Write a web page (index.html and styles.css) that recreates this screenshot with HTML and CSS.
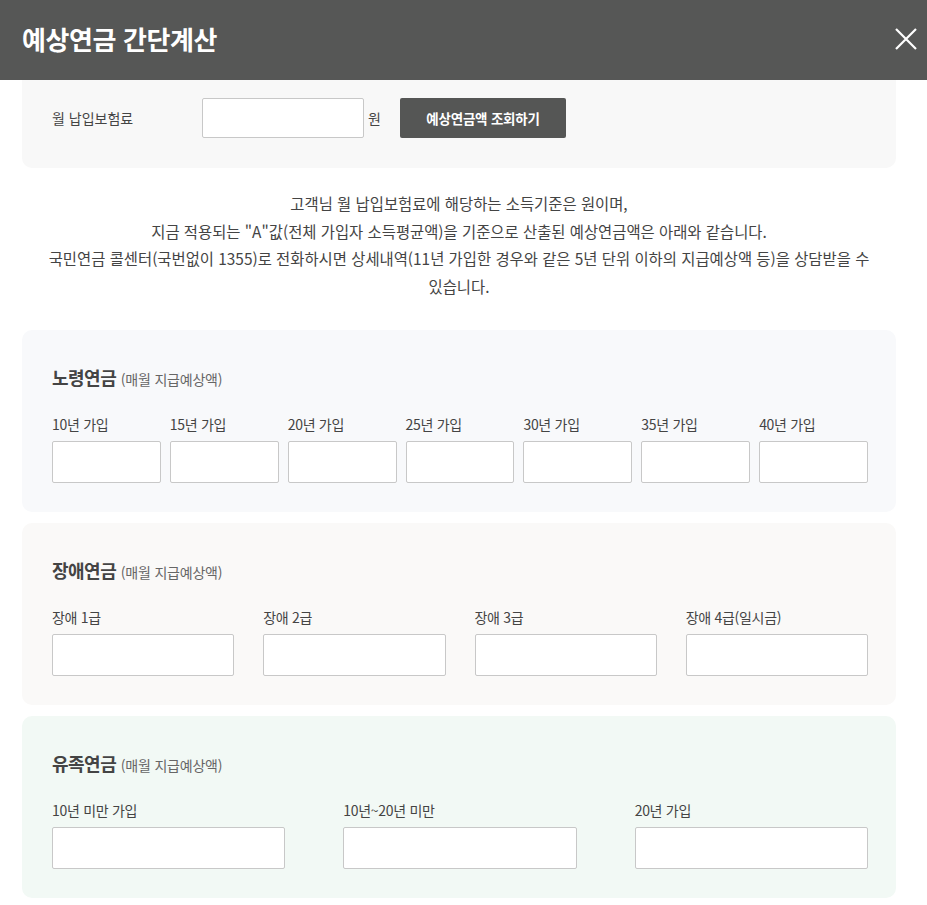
FILE: index.html
```html
<!DOCTYPE html>
<html lang="ko">
<head>
<meta charset="utf-8">
<title>예상연금 간단계산</title>
<link rel="stylesheet" href="styles.css">
</head>
<body>
<header class="top">
  <h1 class="title">예상연금 간단계산</h1>
  <button class="close" aria-label="닫기">
    <svg width="22" height="22" viewBox="0 0 22 22"><path d="M1 1 L21 21 M21 1 L1 21" stroke="#fff" stroke-width="2.2" fill="none"/></svg>
  </button>
</header>
<main class="wrap">
  <section class="card card-query">
    <span class="q-label">월 납입보험료</span>
    <input class="field q-input" type="text">
    <span class="unit">원</span>
    <button class="q-btn">예상연금액 조회하기</button>
  </section>

  <p class="desc">고객님 월 납입보험료에 해당하는 소득기준은 원이며,<br>지금 적용되는 "A"값(전체 가입자 소득평균액)을 기준으로 산출된 예상연금액은 아래와 같습니다.<br>국민연금 콜센터(국번없이 1355)로 전화하시면 상세내역(11년 가입한 경우와 같은 5년 단위 이하의 지급예상액 등)을 상담받을 수<br>있습니다.</p>

  <section class="card card-old">
    <h2 class="sec-title">노령연금 <small>(매월 지급예상액)</small></h2>
    <div class="grid grid-7">
      <label class="cell"><span class="lab">10년 가입</span><input class="field" type="text"></label>
      <label class="cell"><span class="lab">15년 가입</span><input class="field" type="text"></label>
      <label class="cell"><span class="lab">20년 가입</span><input class="field" type="text"></label>
      <label class="cell"><span class="lab">25년 가입</span><input class="field" type="text"></label>
      <label class="cell"><span class="lab">30년 가입</span><input class="field" type="text"></label>
      <label class="cell"><span class="lab">35년 가입</span><input class="field" type="text"></label>
      <label class="cell"><span class="lab">40년 가입</span><input class="field" type="text"></label>
    </div>
  </section>

  <section class="card card-dis">
    <h2 class="sec-title">장애연금 <small>(매월 지급예상액)</small></h2>
    <div class="grid grid-4">
      <label class="cell"><span class="lab">장애 1급</span><input class="field" type="text"></label>
      <label class="cell"><span class="lab">장애 2급</span><input class="field" type="text"></label>
      <label class="cell"><span class="lab">장애 3급</span><input class="field" type="text"></label>
      <label class="cell"><span class="lab">장애 4급(일시금)</span><input class="field" type="text"></label>
    </div>
  </section>

  <section class="card card-sur">
    <h2 class="sec-title">유족연금 <small>(매월 지급예상액)</small></h2>
    <div class="grid grid-3">
      <label class="cell"><span class="lab">10년 미만 가입</span><input class="field" type="text"></label>
      <label class="cell"><span class="lab">10년~20년 미만</span><input class="field" type="text"></label>
      <label class="cell"><span class="lab">20년 가입</span><input class="field" type="text"></label>
    </div>
  </section>
</main>
</body>
</html>
```

FILE: styles.css
```css
* { box-sizing: border-box; }
html, body { margin: 0; padding: 0; background: #fff; }
body {
  font-family: "Noto Sans CJK KR", "Noto Sans", sans-serif;
  color: #444;
  overflow: hidden;
}
.top {
  height: 80px;
  background: #565756;
  display: flex;
  align-items: center;
  justify-content: space-between;
  padding: 0 10px 2px 22px;
}
.title {
  margin: 0;
  color: #fff;
  font-size: 26px;
  font-weight: 700;
  letter-spacing: -0.4px;
  line-height: 1;
}
.close {
  background: none;
  border: 0;
  padding: 0;
  width: 22px;
  height: 22px;
  cursor: pointer;
}
.close svg { display: block; }
.wrap {
  width: 874px;
  margin-left: 22px;
  padding-bottom: 20px;
}
.card { border-radius: 10px; }
.card-query {
  background: #f8f8f8;
  border-radius: 0 0 10px 10px;
  padding: 18px 30px 30px 30px;
  display: flex;
  align-items: center;
}
.q-label {
  width: 150px;
  font-size: 14px;
  color: #444;
}
.field {
  display: block;
  height: 42px;
  border: 1px solid #c8c8c8;
  border-radius: 2px;
  background: #fff;
  font: inherit;
  padding: 0 8px;
  width: 100%;
}
.q-input { width: 162px; height: 40px; }
.unit {
  font-size: 14px;
  margin-left: 4px;
  width: 32px;
}
.q-btn {
  width: 166px;
  height: 40px;
  border: 0;
  border-radius: 2px;
  background: #555655;
  color: #fff;
  font-family: inherit;
  font-size: 13.5px;
  font-weight: 700;
  letter-spacing: -0.2px;
}
.desc {
  margin: 22px 0 29px;
  text-align: center;
  font-size: 15.4px;
  line-height: 27.7px;
  color: #444;
  letter-spacing: 0;
}
.card-old, .card-dis, .card-sur {
  padding: 36px 28px 29px 30px;
  margin-bottom: 11px;
}
.card-old { background: #f8f9fb; }
.card-dis { background: #faf9f8; }
.card-sur { background: #f2f9f5; }
.sec-title {
  margin: 0 0 26px;
  font-size: 18px;
  line-height: 22px;
  height: 22px;
  font-weight: 700;
  color: #444;
  letter-spacing: -0.5px;
}
.sec-title small {
  font-size: 14px;
  line-height: 1;
  font-weight: 400;
  color: #666;
  letter-spacing: -0.2px;
}
.grid { display: grid; }
.grid-7 { grid-template-columns: repeat(7, 1fr); column-gap: 9px; }
.grid-4 { grid-template-columns: repeat(4, 1fr); column-gap: 29px; }
.grid-3 { grid-template-columns: repeat(3, 1fr); column-gap: 58px; }
.cell { display: block; }
.lab {
  display: block;
  font-size: 14px;
  line-height: 20px;
  margin-bottom: 7px;
  color: #444;
  letter-spacing: -0.3px;
}
```
